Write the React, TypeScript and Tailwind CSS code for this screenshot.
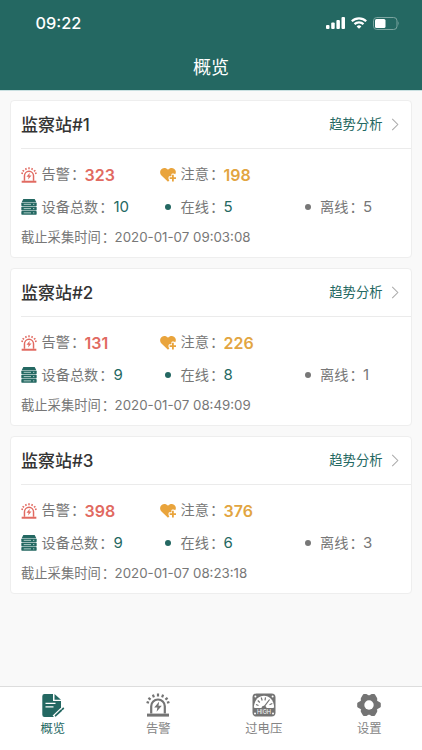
import React from "react";

type Station = { name: string; alarm: number; notice: number; total: number; online: number; offline: number; time: string };

const stations: Station[] = [
  { name: "监察站#1", alarm: 323, notice: 198, total: 10, online: 5, offline: 5, time: "2020-01-07 09:03:08" },
  { name: "监察站#2", alarm: 131, notice: 226, total: 9, online: 8, offline: 1, time: "2020-01-07 08:49:09" },
  { name: "监察站#3", alarm: 398, notice: 376, total: 9, online: 6, offline: 3, time: "2020-01-07 08:23:18" },
];

function Siren({ className }: { className: string }) {
  return (
    <svg viewBox="0 0 24 24" className={className} fill="none" stroke="currentColor" strokeWidth="2.2">
      <path d="M5.2 20.500v-7.200a6.800 6.800 0 0 1 13.600 0v7.200" />
      <path d="M1 20.600h22v3H1z" fill="currentColor" stroke="none" />
      <path d="M12 .5v3M6.900 1.700l1 2.600M17.100 1.700l-1 2.600M2.400 4.800l2.200 1.800M21.600 4.800l-2.200 1.800M.6 9l2.400.8M23.400 9l-2.400.8" strokeWidth="2.200" />
      <path d="M13.200 8.600l-5 6h3.200l-.8 4.200 5.200-6h-3.300z" fill="currentColor" stroke="none" />
    </svg>
  );
}

function HeartPlus() {
  return (
    <svg viewBox="0 0 24 24" className="h-4 w-4 shrink-0 text-[#e9a43c]" fill="currentColor">
      <path d="M12 22L2.200 12.800C-.9 9.600-.3 4.500 3 2.500c3-1.800 6.800-.9 9 1.800 2.200-2.700 6-3.600 9-1.800 2.800 1.700 3.600 5.400 1.900 8.300-1.300-1-3.800-1.200-5.700-.3v3.300h-3.700c-1.400 2.300-1 5 .6 6.200z" />
      <path d="M18 11.800h2.700v3.600H24v2.700h-3.300v3.700H18v-3.700h-3.500v-2.700H18z" />
    </svg>
  );
}

function Server() {
  return (
    <svg viewBox="0 0 24 24" className="h-4 w-4 shrink-0" fill="#246862">
      <path d="M3.500 0h17l2.300 4.600H1.200z" />
      <rect x=".5" y="5.300" width="23" height="5.400" rx="1" />
      <rect x=".5" y="11.700" width="23" height="5.400" rx="1" />
      <rect x=".5" y="18.100" width="23" height="5.400" rx="1" />
      <path d="M4 8h11M4 14.400h11M4 20.800h11M18 8h2M18 14.400h2M18 20.800h2" stroke="#c3dbd7" strokeWidth="1.300" />
    </svg>
  );
}

function Label({ children }: { children: string }) {
  return (
    <span className="flex shrink-0">
      <span>{children}</span>
      <span className="w-[1em] pl-[0.08em] font-['Noto_Sans_CJK_TC',sans-serif] [font-feature-settings:'halt']">：</span>
    </span>
  );
}

function StationCard({ s }: { s: Station }) {
  return (
    <section className="h-[158px] rounded-[4px] border border-[#eeeeee] bg-white pl-[10px] text-[14.2px] text-[#777777]">
      <div className="flex h-[48px] items-center justify-between border-b border-[#ebebeb] pr-[12px]">
        <h2 className="pt-px text-[17px] font-medium text-[#333333]">{s.name}</h2>
        <div className="flex items-center gap-[8.5px] pt-px text-[13.3px] text-[#246862]">
          趋势分析
          <svg viewBox="0 0 8 14" className="h-[13px] w-[8px]" fill="none" stroke="#aaaaaa" strokeWidth="1.100">
            <path d="M1 1l6 6-6 6" />
          </svg>
        </div>
      </div>
      <div className="mt-[9px] grid h-[33px] grid-cols-[139px_139.5px_1fr] items-center">
        <div className="flex items-center gap-[4.5px]">
          <Siren className="h-4 w-4 shrink-0 text-[#e16a61]" />
          <Label>告警</Label>
          <b className="-ml-[4px] text-[16px] leading-[14px] font-semibold text-[#e16a61]">{s.alarm}</b>
        </div>
        <div className="flex items-center gap-[4.5px]">
          <HeartPlus />
          <Label>注意</Label>
          <b className="-ml-[4px] text-[16px] leading-[14px] font-semibold text-[#e2a541]">{s.notice}</b>
        </div>
      </div>
      <div className="grid h-[32px] grid-cols-[139px_139.5px_1fr] items-center">
        <div className="flex items-center gap-[4.5px]">
          <Server />
          <Label>设备总数</Label>
          <span className="-ml-[3.5px] text-[15px] leading-[14px] text-[#246862]">{s.total}</span>
        </div>
        <div className="flex items-center gap-[4.5px]">
          <i className="ml-[5px] mr-[5px] h-[6px] w-[6px] rounded-full bg-[#246862]" />
          <Label>在线</Label>
          <span className="-ml-[4px] text-[15px] leading-[14px] text-[#246862]">{s.online}</span>
        </div>
        <div className="flex items-center gap-[4.5px]">
          <i className="ml-[5px] mr-[5px] h-[6px] w-[6px] rounded-full bg-[#777777]" />
          <Label>离线</Label>
          <span className="-ml-[4px] text-[15px] leading-[14px]">{s.offline}</span>
        </div>
      </div>
      <div className="flex h-[29px] items-center text-[13.3px]">
        <Label>截止采集时间</Label>
        <span className="ml-[0.5px] text-[13.3px]">{s.time}</span>
      </div>
    </section>
  );
}

function NoteIcon() {
  return (
    <svg viewBox="0 0 24 24" className="h-6 w-6" fill="#246862">
      <path d="M3.500 1H12v7h8v7l-6.800 9H3.500A2.300 2.300 0 0 1 1.300 21.700V3.300A2.300 2.300 0 0 1 3.500 1z" />
      <path d="M13.500 1l6.500 5.700h-6.500z" />
      <path d="M4.500 10.400h10M4.500 13.800h8" stroke="white" strokeWidth="1.300" />
      <path d="M13 24l8-7.500" stroke="white" strokeWidth="4" />
      <path d="M14.600 22.700l5.500-5.200M21.300 16.400l1-1" stroke="#246862" strokeWidth="1.800" strokeLinecap="round" />
    </svg>
  );
}

function MeterIcon() {
  return (
    <svg viewBox="0 0 24 24" className="h-6 w-6">
      <rect x=".5" y=".5" width="23" height="23" rx="4" fill="#747474" />
      <path d="M1.800 14.300C2.500 6.800 6.600 2.800 12 2.800s9.500 4 10.200 11.500l-1 .8H2.800z" fill="white" />
      <path d="M4 11.500l2.500 1M5.800 7.500l2 2M9.200 4.500l1 3M13.500 4.300l-.5 3M20.300 10.500l-2.800 1.300M17.600 6.500L12 13.800" stroke="#747474" strokeWidth="1.200" />
      <path d="M9.500 15.200a2.500 2.500 0 0 1 5 0z" fill="#747474" />
      <g fill="white"><circle cx="3.400" cy="3.400" r="1" /><circle cx="20.600" cy="3.400" r="1" /><circle cx="3" cy="20.500" r="1" /><circle cx="21" cy="20.500" r="1" /></g>
      <text x="12" y="21.400" textAnchor="middle" fontSize="5.700" fontFamily="Inter" fill="white">HIGH</text>
    </svg>
  );
}

function GearIcon() {
  return (
    <svg viewBox="0 0 24 24" className="h-6 w-6" fill="#747474" stroke="#747474" strokeWidth="2.400" strokeLinejoin="round">
      <path d="M6.900 2.300h2.300L12 4l2.800-1.700h2.300l1.900 3.300v2.900l3.600 2v3l-3.600 2v2.900l-1.900 3.300h-2.300L12 20l-2.800 1.700H6.900L5 18.400v-2.900l-3.600-2v-3l3.600-2V5.600z" />
      <circle cx="12" cy="12" r="4.700" fill="white" stroke="none" />
    </svg>
  );
}

export default function App() {
  const tabs = [
    { label: "概览", icon: <NoteIcon /> },
    { label: "告警", icon: <Siren className="h-6 w-6 text-[#747474]" /> },
    { label: "过电压", icon: <MeterIcon /> },
    { label: "设置", icon: <GearIcon /> },
  ];
  return (
    <div className="flex h-[750px] w-[422px] flex-col overflow-hidden bg-[#f9f9f9] font-[Inter,'Noto_Sans_CJK_SC',sans-serif] leading-none">
      <header className="h-[91px] shrink-0 border-b border-[#c9e0e1] bg-[#246862] text-white">
        <div className="flex h-[46px] items-center justify-between pl-[35.5px] pr-[22px]">
          <span className="text-[16.3px] font-medium">09:22</span>
          <div className="flex items-center gap-[6px]">
            <svg viewBox="0 0 19 12" className="h-3 w-[19px]" fill="white">
              <rect y="8" width="3.500" height="4" rx="1" /><rect x="5.200" y="5.500" width="3.500" height="6.500" rx="1" /><rect x="10.400" y="3" width="3.500" height="9" rx="1" /><rect x="15.500" y="0" width="3.500" height="12" rx="1" />
            </svg>
            <svg viewBox="0 0 16 12" className="h-3 w-4" fill="none" stroke="white" strokeWidth="2.200">
              <path d="M.8 4.300a10.300 10.300 0 0 1 14.400 0M3.500 7.100a6.500 6.500 0 0 1 9 0" />
              <path d="M8 11.800L5.600 9.400a3.500 3.500 0 0 1 4.800 0z" fill="white" stroke="none" />
            </svg>
            <svg viewBox="0 0 27 13" className="h-[13px] w-[27px]">
              <rect x=".5" y=".5" width="23.500" height="12" rx="3.300" fill="none" stroke="#7ba5a0" />
              <rect x="2" y="2" width="10.500" height="9" rx="1.500" fill="white" />
              <path d="M25.300 4.300q1.700 2.200 0 4.400z" fill="#7ba5a0" />
            </svg>
          </div>
        </div>
        <h1 className="flex h-[44px] items-center justify-center text-[18px] font-normal">概览</h1>
      </header>
      <main className="flex flex-1 flex-col gap-[10px] px-[10px] pt-[9px]">
        {stations.map((s) => <StationCard key={s.name} s={s} />)}
      </main>
      <nav className="grid h-[64px] shrink-0 grid-cols-4 border-t border-[#dddddd] bg-white">
        {tabs.map((t, i) => (
          <div key={t.label} className={i === 0 ? "flex flex-col items-center gap-[6px] pt-[6px] text-[12.3px] text-[#246862]" : "flex flex-col items-center gap-[6px] pt-[6px] text-[12.3px] text-[#858585]"}>
            {t.icon}
            <span>{t.label}</span>
          </div>
        ))}
      </nav>
    </div>
  );
}
